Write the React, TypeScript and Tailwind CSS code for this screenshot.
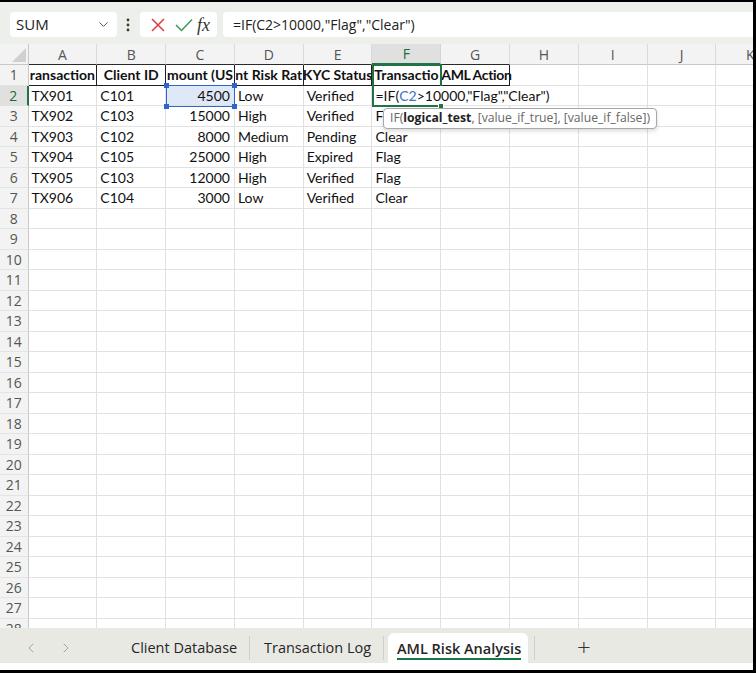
import React from "react";
import { ChevronDown, ChevronLeft, ChevronRight } from "lucide-react";

const COLS = ["A", "B", "C", "D", "E", "F", "G", "H", "I", "J", "K"];

const HEAD1 = ["ransaction", "Client ID", "mount (US", "nt Risk Rat", "KYC Status", "Transactio", "AML Action"];

const DATA: Record<number, string[]> = {
  2: ["TX901", "C101", "4500", "Low", "Verified", ""],
  3: ["TX902", "C103", "15000", "High", "Verified", "F"],
  4: ["TX903", "C102", "8000", "Medium", "Pending", "Clear"],
  5: ["TX904", "C105", "25000", "High", "Expired", "Flag"],
  6: ["TX905", "C103", "12000", "High", "Verified", "Flag"],
  7: ["TX906", "C104", "3000", "Low", "Verified", "Clear"],
};

function FormulaBar() {
  return (
    <div className="h-[42px] shrink-0 bg-[#edefea] flex items-start pt-[10px] font-['Open_Sans',sans-serif]">
      <div className="ml-[10px] w-[107px] h-[25px] bg-white rounded-[4px] flex items-center justify-between pl-[6px] pr-[6px]">
        <span className="text-[15px] text-[#222]">SUM</span>
        <ChevronDown size={15} strokeWidth={1.6} color="#555" />
      </div>
      <div className="w-[22px] h-[25px] flex items-center justify-center">
        <svg width="4" height="14" viewBox="0 0 4 14">
          <circle cx="2" cy="2" r="1.4" fill="#3a3a3a" />
          <circle cx="2" cy="7" r="1.4" fill="#3a3a3a" />
          <circle cx="2" cy="12" r="1.4" fill="#3a3a3a" />
        </svg>
      </div>
      <div className="ml-[1px] w-[77px] h-[25px] bg-white rounded-[4px] flex items-center">
        <svg className="ml-[11px]" width="14" height="14" viewBox="0 0 14 14">
          <path d="M1 1 L13 13 M13 1 L1 13" stroke="#e0393e" strokeWidth="1.5" fill="none" />
        </svg>
        <svg className="ml-[10px]" width="18" height="14" viewBox="0 0 18 14">
          <path d="M1 7 L6.5 12.5 L17 1.5" stroke="#3a9a5a" strokeWidth="1.5" fill="none" />
        </svg>
        <span className="ml-[4px] font-['Liberation_Serif',serif] italic text-[18px] leading-none text-[#333]">fx</span>
      </div>
      <div className="ml-[6px] flex-1 h-[25px] bg-white rounded-l-[4px] flex items-center pl-[10px] text-[14px] text-[#222] whitespace-nowrap">
        =IF(C2&gt;10000,"Flag","Clear")
      </div>
    </div>
  );
}

function HeaderRow() {
  return (
    <div className="flex h-[21px] shrink-0 font-['Open_Sans',sans-serif] text-[14px]">
      <div className="w-[28.5px] shrink-0 relative bg-[#f3f3f3] border-r border-b border-[#c8c8c8]">
        <svg className="absolute right-[2px] bottom-[2px]" width="14" height="14" viewBox="0 0 14 14">
          <polygon points="14,0 14,14 0,14" fill="#d0d0d0" />
        </svg>
      </div>
      {COLS.map((c, i) =>
        i === 5 ? (
          <div
            key={c}
            className="w-[68.8px] shrink-0 flex items-center justify-center bg-[#e0e0e0] text-[#1c6b3c] border-r border-r-[#d4d4d4] border-b-2 border-b-[#217346]"
          >
            {c}
          </div>
        ) : i <= 6 ? (
          <div
            key={c}
            className="w-[68.8px] shrink-0 flex items-center justify-center bg-[#f3f3f3] text-[#555] border-r border-r-[#dadada] border-b border-b-[#2a2a2a]"
          >
            {c}
          </div>
        ) : (
          <div
            key={c}
            className="w-[68.8px] shrink-0 flex items-center justify-center bg-[#f3f3f3] text-[#555] border-r border-r-[#dadada] border-b border-b-[#c8c8c8]"
          >
            {c}
          </div>
        )
      )}
    </div>
  );
}

function RowHead({ n }: { n: number }) {
  return n === 2 ? (
    <div className="w-[28.5px] shrink-0 flex items-center justify-center bg-[#e0e0e0] text-[#1c6b3c] border-b border-b-[#e1e1e1] border-r-2 border-r-[#217346] font-['Open_Sans',sans-serif] text-[14px]">
      {n}
    </div>
  ) : (
    <div className="w-[28.5px] shrink-0 flex items-start justify-center bg-[#f3f3f3] text-[#555] border-b border-b-[#e4e4e4] border-r border-r-[#c8c8c8] font-['Open_Sans',sans-serif] text-[14px] leading-[20px]">
      {n}
    </div>
  );
}

function Row({ n }: { n: number }) {
  const vals = DATA[n] || [];
  return (
    <div className="flex h-[20.5px] shrink-0">
      <RowHead n={n} />
      {COLS.map((c, i) => {
        if (n === 1 && i === 6) {
          return (
            <div
              key={c}
              className="w-[68.8px] shrink-0 flex items-center justify-start whitespace-nowrap border-r border-b border-[#1f1f1f] font-bold text-[14px] tracking-[-0.35px] text-[#111] relative z-[1]"
            >
              {HEAD1[i]}
            </div>
          );
        }
        if (n === 1 && i <= 5) {
          return (
            <div
              key={c}
              className="w-[68.8px] shrink-0 flex items-center justify-center overflow-hidden whitespace-nowrap border-r border-b border-[#1f1f1f] font-bold text-[14px] text-[#111]"
            >
              {HEAD1[i]}
            </div>
          );
        }
        const v = vals[i] || "";
        if (i === 2) {
          return (
            <div
              key={c}
              className={
                n === 2
                  ? "w-[68.8px] shrink-0 flex items-center justify-end pr-[4px] bg-[#dfe8f7] border-r border-b border-[#e1e1e1] text-[14px] text-[#111]"
                  : "w-[68.8px] shrink-0 flex items-center justify-end pr-[4px] border-r border-b border-[#e1e1e1] text-[14px] text-[#111]"
              }
            >
              {v}
            </div>
          );
        }
        return (
          <div
            key={c}
            className="w-[68.8px] shrink-0 flex items-center pl-[3px] overflow-hidden whitespace-nowrap border-r border-b border-[#e1e1e1] text-[14px] text-[#111]"
          >
            {v}
          </div>
        );
      })}
    </div>
  );
}

function Grid() {
  const rows = Array.from({ length: 28 }, (_, i) => i + 1);
  return (
    <div className="relative h-[584px] shrink-0 overflow-hidden font-['Lato',sans-serif]">
      <HeaderRow />
      {rows.map((n) => (
        <Row key={n} n={n} />
      ))}

      {/* C2 reference range */}
      <div className="absolute left-[165.6px] top-[41px] w-[69.8px] h-[21.5px] border border-[#2f66cc] z-10">
        <div className="absolute -left-[3px] -top-[3px] w-[5px] h-[5px] bg-[#2f66cc]" />
        <div className="absolute -right-[3px] -top-[3px] w-[5px] h-[5px] bg-[#2f66cc]" />
        <div className="absolute -left-[3px] -bottom-[3px] w-[5px] h-[5px] bg-[#2f66cc]" />
        <div className="absolute -right-[3px] -bottom-[3px] w-[5px] h-[5px] bg-[#2f66cc]" />
      </div>

      {/* Active selection F1:F2 */}
      <div className="absolute left-[371.5px] top-[19.5px] w-[70px] h-[43px] border-2 border-[#217346] z-10" />

      {/* Editing text in F2 */}
      <div className="absolute left-[373.5px] top-[42px] h-[18.5px] bg-white z-20 flex items-center pl-[2px] pr-[3px] whitespace-nowrap text-[14px] text-[#111]">
        =IF(<span className="text-[#3b72c4]">C2</span>&gt;10000,"Flag","Clear")
      </div>

      {/* Fill handle */}
      <div className="absolute left-[438px] top-[59px] w-[6px] h-[6px] bg-[#217346] border border-white z-30" />

      {/* Tooltip */}
      <div className="absolute left-[383px] top-[64px] h-[21px] px-[6px] bg-white border border-[#a8a8a8] rounded-[4px] shadow-[0_2px_4px_rgba(0,0,0,0.15)] z-30 flex items-center whitespace-nowrap font-['Open_Sans',sans-serif] text-[12.2px] text-[#666]">
        IF(<span className="font-bold text-[#222]">logical_test</span>, [value_if_true], [value_if_false])
      </div>
    </div>
  );
}

function Tabs() {
  return (
    <div className="h-[35px] shrink-0 bg-[#e9e9e4] flex items-center pt-[5px] font-['Open_Sans',sans-serif] text-[14.5px] text-[#262626] whitespace-nowrap">
      <div className="ml-[23px] w-[16px] flex justify-center">
        <ChevronLeft size={16} strokeWidth={1.5} color="#a3a3a3" />
      </div>
      <div className="ml-[19px] w-[16px] flex justify-center">
        <ChevronRight size={16} strokeWidth={1.5} color="#a3a3a3" />
      </div>
      <div className="ml-[57px] w-[118px]">Client Database</div>
      <div className="w-[1px] h-[24px] bg-[#cfcfcf]" />
      <div className="w-[133px] pl-[14px]">Transaction Log</div>
      <div className="w-[1px] h-[24px] bg-[#cfcfcf]" />
      <div className="ml-[4px] w-[140px] self-stretch bg-white rounded-t-[6px] pl-[9px] pt-[5px]">
        <span className="inline-block font-semibold leading-[19px] border-b-2 border-[#107c41]">AML Risk Analysis</span>
      </div>
      <div className="ml-[6px] w-[1px] h-[24px] bg-[#cfcfcf]" />
      <div className="ml-[42px] text-[24px] font-light leading-none text-[#333] -mt-[3px]">+</div>
    </div>
  );
}

export default function App() {
  return (
    <div className="w-[756px] h-[673px] bg-black overflow-hidden">
      <div className="mt-[2px] w-[753px] h-[668px] bg-white flex flex-col overflow-hidden">
        <FormulaBar />
        <Grid />
        <Tabs />
        <div className="h-[7px] shrink-0 bg-white" />
      </div>
    </div>
  );
}
